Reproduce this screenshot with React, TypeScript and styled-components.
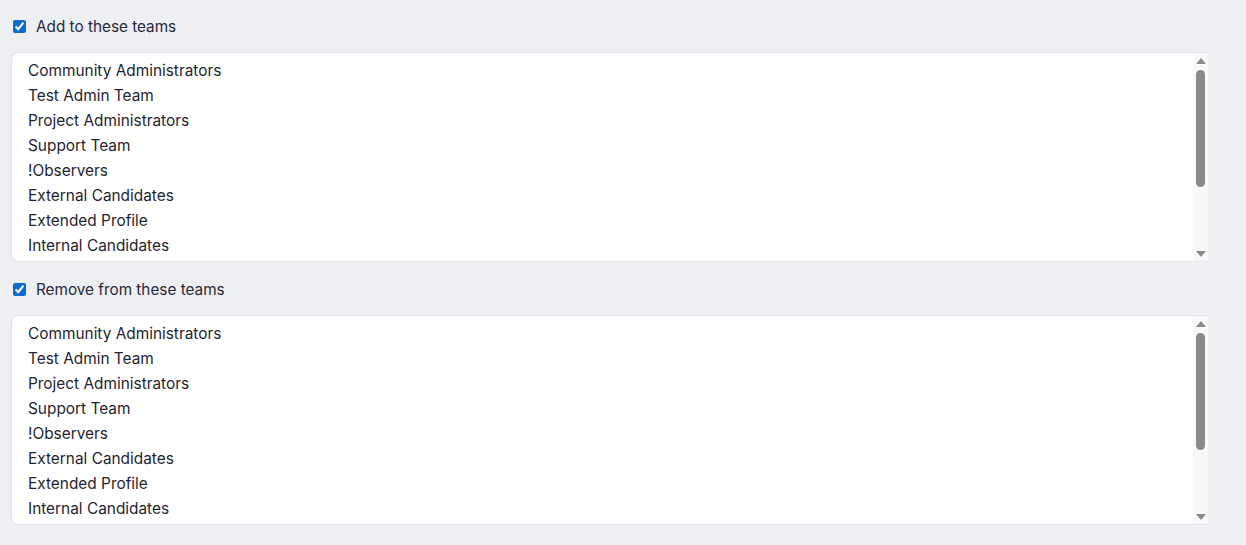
import React from 'react';
import styled, { createGlobalStyle } from 'styled-components';

const GlobalStyle = createGlobalStyle`
    html, body {
        margin: 0;
        padding: 0;
        background: #eeeff3;
    }
    body {
        font-family: Inter, 'Noto Sans', sans-serif;
        color: #1f2430;
    }
`;

const Wrapper = styled.div`
    display: flex;
    flex-direction: column;
    padding: 16px 38px 20px 11px;
`;

const Section = styled.div`
    display: flex;
    flex-direction: column;
    gap: 16px;
    margin-bottom: 17px;
`;

const CheckRow = styled.label`
    display: flex;
    align-items: center;
    gap: 10px;
    padding-left: 2px;
    height: 20px;
    font-size: 15.3px;
    color: #27283a;
    cursor: pointer;

    input {
        margin: 0;
        width: 13px;
        height: 13px;
        accent-color: #0b6bd3;
    }
`;

const ListBox = styled.div`
    display: flex;
    height: 210px;
    box-sizing: border-box;
    border: 1px solid #e3e4ea;
    border-right: none;
    border-radius: 8px 0 0 8px;
    background: #ffffff;
    overflow: hidden;
`;

const Items = styled.div`
    flex: 1;
    padding: 5px 0;
`;

const Item = styled.div`
    height: 25px;
    padding: 0 16px;
    display: flex;
    align-items: center;
    font-size: 15.4px;
    color: #1f2430;
    white-space: nowrap;
`;

const ScrollTrack = styled.div`
    width: 15px;
    flex: none;
    background: #f8f8f8;
    display: flex;
    flex-direction: column;
    align-items: center;
    padding: 5px 0 4px;
    box-sizing: border-box;
`;

const Arrow = styled.div<{ $down?: boolean }>`
    width: 0;
    height: 0;
    border-left: 5px solid transparent;
    border-right: 5px solid transparent;
    ${({ $down }) =>
        $down ? 'border-top: 6px solid #8a8a8a;' : 'border-bottom: 6px solid #8a8a8a;'}
    margin: ${({ $down }) => ($down ? 'auto 0 0' : '0 0 6px')};
`;

const Thumb = styled.div`
    width: 9px;
    height: 117px;
    border-radius: 5px;
    background: #8a8a8a;
`;

// only the rows in view; the thumb shows there are more below
const teams = [
    'Community Administrators',
    'Test Admin Team',
    'Project Administrators',
    'Support Team',
    '!Observers',
    'External Candidates',
    'Extended Profile',
    'Internal Candidates',
];

interface GroupProps {
    label: string;
}

const TeamGroup: React.FC<GroupProps> = ({ label }) => {
    return (
        <Section>
            <CheckRow>
                <input type="checkbox" defaultChecked />
                {label}
            </CheckRow>
            <ListBox role="listbox" aria-multiselectable>
                <Items>
                    {teams.map((team) => (
                        <Item key={team} role="option">
                            {team}
                        </Item>
                    ))}
                </Items>
                <ScrollTrack>
                    <Arrow />
                    <Thumb />
                    <Arrow $down />
                </ScrollTrack>
            </ListBox>
        </Section>
    );
};

const App: React.FC = () => {
    return (
        <>
            <GlobalStyle />
            <Wrapper>
                <TeamGroup label="Add to these teams" />
                <TeamGroup label="Remove from these teams" />
            </Wrapper>
        </>
    );
};

export default App;
